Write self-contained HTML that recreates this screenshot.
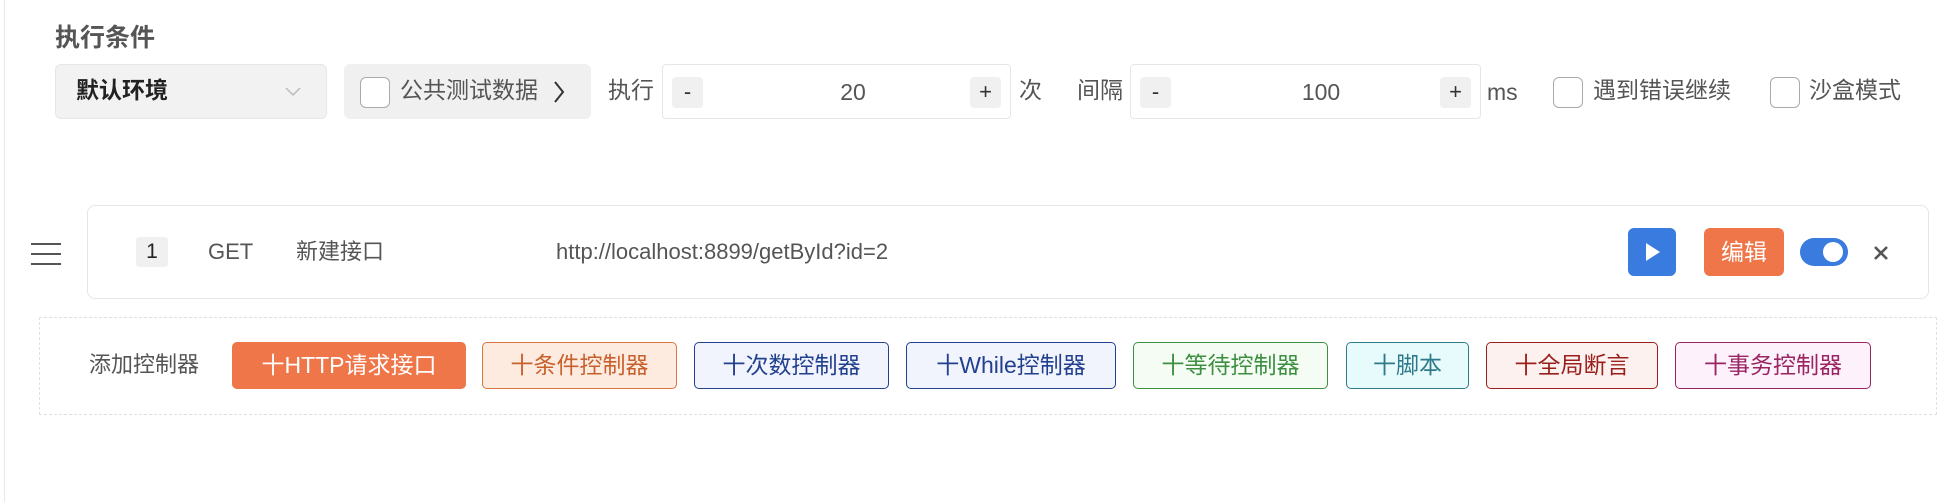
<!DOCTYPE html>
<html><head><meta charset="utf-8"><style>
*{box-sizing:border-box;margin:0;padding:0}
body{width:1956px;height:502px;background:#fff;font-family:"Liberation Sans","Noto Sans CJK SC",sans-serif;color:#555;position:relative;overflow:hidden}
.a{position:absolute}
.vl{left:4px;top:0;width:1px;height:502px;background:#e8e8e8}
.t{font-size:23px;line-height:1;white-space:nowrap}
.cb{position:absolute;width:30px;height:31px;border:1.5px solid #aaa;border-radius:6px;background:#fff}
.pm{position:absolute;width:31px;height:31px;background:#f0f0f0;border-radius:4px;font-size:22px;line-height:29px;text-align:center;color:#333}
.btn{position:absolute;top:342px;height:47px;border-radius:5px;border:1.5px solid;font-size:23px;line-height:44px;text-align:center;white-space:nowrap}
</style></head><body>
<div class="a vl"></div>
<div class="a t" style="left:55px;top:26px;font-size:25px;color:#555;font-weight:bold">执行条件</div>

<div class="a" style="left:55px;top:64px;width:272px;height:55px;background:#f2f2f2;border:1.5px solid #e6e6e6;border-radius:6px"></div>
<div class="a t" style="left:76px;top:79px;color:#222;font-weight:bold">默认环境</div>
<svg class="a" style="left:284px;top:86px" width="18" height="12"><path d="M2 2 L9 9 L16 2" fill="none" stroke="#bbb" stroke-width="1.5"/></svg>

<div class="a" style="left:344px;top:64px;width:247px;height:55px;background:#f0f0f0;border-radius:6px"></div>
<div class="cb" style="left:360px;top:77px"></div>
<div class="a t" style="left:400px;top:79px;color:#555">公共测试数据</div>
<svg class="a" style="left:552px;top:80px" width="14" height="24"><path d="M3 2 L11 12 L3 22" fill="none" stroke="#333" stroke-width="2"/></svg>

<div class="a t" style="left:608px;top:79px">执行</div>
<div class="a" style="left:662px;top:64px;width:349px;height:55px;border:1.5px solid #e6e6e6;border-radius:4px"></div>
<div class="pm" style="left:672px;top:77px">-</div>
<div class="a t" style="left:820px;top:81px;width:66px;text-align:center;color:#555">20</div>
<div class="pm" style="left:970px;top:77px">+</div>
<div class="a t" style="left:1019px;top:79px">次</div>
<div class="a t" style="left:1077px;top:79px">间隔</div>
<div class="a" style="left:1130px;top:64px;width:351px;height:55px;border:1.5px solid #e6e6e6;border-radius:4px"></div>
<div class="pm" style="left:1140px;top:77px">-</div>
<div class="a t" style="left:1288px;top:81px;width:66px;text-align:center">100</div>
<div class="pm" style="left:1440px;top:77px">+</div>
<div class="a t" style="left:1487px;top:81px">ms</div>
<div class="cb" style="left:1553px;top:77px"></div>
<div class="a t" style="left:1593px;top:79px">遇到错误继续</div>
<div class="cb" style="left:1770px;top:77px"></div>
<div class="a t" style="left:1809px;top:79px">沙盒模式</div>

<svg class="a" style="left:31px;top:242px" width="30" height="24"><path d="M0 2H30M0 12H30M0 22H30" stroke="#555" stroke-width="2"/></svg>
<div class="a" style="left:87px;top:205px;width:1842px;height:94px;border:1.5px solid #e6e6e6;border-radius:8px"></div>
<div class="a" style="left:136px;top:237px;width:32px;height:30px;background:#f0f0f0;border-radius:3px;font-size:21px;line-height:30px;text-align:center;color:#222">1</div>
<div class="a t" style="left:208px;top:241px;font-size:22px">GET</div>
<div class="a t" style="left:296px;top:241px;font-size:22px">新建接口</div>
<div class="a t" style="left:556px;top:241px;font-size:22px">http://localhost:8899/getById?id=2</div>
<div class="a" style="left:1628px;top:228px;width:48px;height:48px;background:#3a7be0;border-radius:6px"></div>
<svg class="a" style="left:1640px;top:240px" width="24" height="24"><path d="M6 3 L20 12 L6 21Z" fill="#fff"/></svg>
<div class="a" style="left:1704px;top:228px;width:80px;height:48px;background:#ee7649;border-radius:6px;color:#fff;font-size:23px;line-height:48px;text-align:center">编辑</div>
<div class="a" style="left:1800px;top:238px;width:48px;height:28px;background:#3a7be0;border-radius:14px"></div>
<div class="a" style="left:1823px;top:242px;width:20px;height:20px;background:#fff;border-radius:50%"></div>
<svg class="a" style="left:1873px;top:245px" width="16" height="16"><path d="M2 2L14 14M14 2L2 14" stroke="#555" stroke-width="2.6"/></svg>

<div class="a" style="left:39px;top:317px;width:1898px;height:98px;border:1.5px dashed #e0e0e0"></div>
<div class="a t" style="left:89px;top:354px;font-size:22px">添加控制器</div>
<div class="btn" style="left:232px;width:234px;background:#ee7649;border-color:#ee7649;color:#fff">十HTTP请求接口</div>
<div class="btn" style="left:482px;width:195px;background:#fdebdf;border-color:#d97642;color:#c8602e">十条件控制器</div>
<div class="btn" style="left:694px;width:195px;background:#f1f4fd;border-color:#22408e;color:#22408e">十次数控制器</div>
<div class="btn" style="left:906px;width:210px;background:#f1f4fd;border-color:#22408e;color:#22408e">十While控制器</div>
<div class="btn" style="left:1133px;width:195px;background:#f5fcf3;border-color:#3d8f42;color:#3d8f42">十等待控制器</div>
<div class="btn" style="left:1346px;width:123px;background:#e7fbfc;border-color:#2f7a8a;color:#2f7a8a">十脚本</div>
<div class="btn" style="left:1486px;width:172px;background:#fdf1ef;border-color:#9a1f1c;color:#9a1f1c">十全局断言</div>
<div class="btn" style="left:1675px;width:196px;background:#fdf1fb;border-color:#9a2462;color:#9a2462">十事务控制器</div>
</body></html>
